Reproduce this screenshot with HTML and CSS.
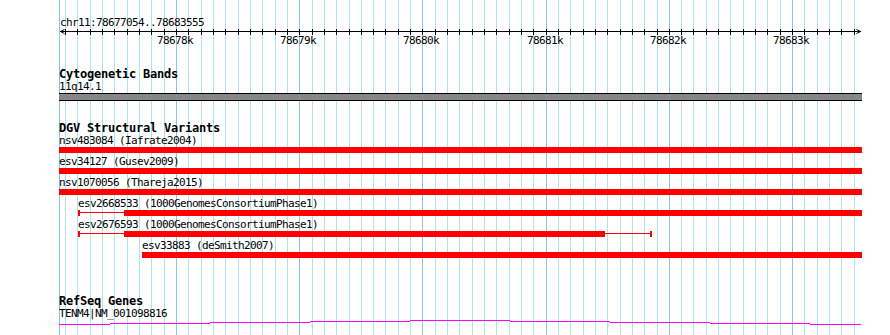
FILE: index.html
```html
<!DOCTYPE html>
<html>
  <head>
    <title>chr11:78677054..78683555</title>
    <link rel="stylesheet" href="styles.css">
  </head>
  <body>
    <div class="browser">
      <!-- grid behind every track, one line per 100 bp -->
      <svg class="grid" width="803" height="335" viewBox="0 0 803 335">
        <path class="grid-minor" d="M6.5 0V335M18.5 0V335M31.5 0V335M43.5 0V335M55.5 0V335M68.5 0V335M80.5 0V335M92.5 0V335M105.5 0V335M129.5 0V335M142.5 0V335M154.5 0V335M166.5 0V335M179.5 0V335M191.5 0V335M203.5 0V335M216.5 0V335M228.5 0V335M253.5 0V335M265.5 0V335M277.5 0V335M290.5 0V335M302.5 0V335M314.5 0V335M326.5 0V335M339.5 0V335M351.5 0V335M376.5 0V335M388.5 0V335M400.5 0V335M413.5 0V335M425.5 0V335M437.5 0V335M450.5 0V335M462.5 0V335M474.5 0V335M499.5 0V335M511.5 0V335M524.5 0V335M536.5 0V335M548.5 0V335M561.5 0V335M573.5 0V335M585.5 0V335M598.5 0V335M622.5 0V335M634.5 0V335M647.5 0V335M659.5 0V335M671.5 0V335M684.5 0V335M696.5 0V335M708.5 0V335M721.5 0V335M745.5 0V335M758.5 0V335M770.5 0V335M782.5 0V335M795.5 0V335"/>
        <path class="grid-major" d="M0.5 0V335M117.5 0V335M240.5 0V335M363.5 0V335M487.5 0V335M610.5 0V335M733.5 0V335"/>
      </svg>

      <section class="ruler">
        <div class="ruler-label">chr11:78677054..78683555</div>
        <svg class="scale" width="803" height="20" viewBox="0 0 803 20">
          <rect x="1" y="3" width="801" height="1"/>
          <path class="ticks" d="M6.5 1V7M18.5 1V7M31.5 1V7M43.5 1V7M55.5 1V7M68.5 1V7M80.5 1V7M92.5 1V7M105.5 1V7M117.5 1V7M129.5 1V7M142.5 1V7M154.5 1V7M166.5 1V7M179.5 1V7M191.5 1V7M203.5 1V7M216.5 1V7M228.5 1V7M240.5 1V7M253.5 1V7M265.5 1V7M277.5 1V7M290.5 1V7M302.5 1V7M314.5 1V7M326.5 1V7M339.5 1V7M351.5 1V7M363.5 1V7M376.5 1V7M388.5 1V7M400.5 1V7M413.5 1V7M425.5 1V7M437.5 1V7M450.5 1V7M462.5 1V7M474.5 1V7M487.5 1V7M499.5 1V7M511.5 1V7M524.5 1V7M536.5 1V7M548.5 1V7M561.5 1V7M573.5 1V7M585.5 1V7M598.5 1V7M610.5 1V7M622.5 1V7M634.5 1V7M647.5 1V7M659.5 1V7M671.5 1V7M684.5 1V7M696.5 1V7M708.5 1V7M721.5 1V7M733.5 1V7M745.5 1V7M758.5 1V7M770.5 1V7M782.5 1V7M795.5 1V7"/>
          <polyline class="arrow" points="5.5,1.5 1.5,3.5 5.5,5.5"/>
          <polyline class="arrow" points="797.5,1.5 801.5,3.5 797.5,5.5"/>
          <text class="tick-label" x="116" y="16">78678k</text>
          <text class="tick-label" x="239" y="16">78679k</text>
          <text class="tick-label" x="362" y="16">78680k</text>
          <text class="tick-label" x="486" y="16">78681k</text>
          <text class="tick-label" x="609" y="16">78682k</text>
          <text class="tick-label" x="732" y="16">78683k</text>
        </svg>
      </section>

      <section class="track cyto">
        <h2 class="track-title">Cytogenetic Bands</h2>
        <div class="feature-label">11q14.1</div>
        <div class="band"></div>
      </section>

      <section class="track dgv">
        <h2 class="track-title">DGV Structural Variants</h2>
        <div class="variant">
          <div class="feature-label">nsv483084 (Iafrate2004)</div>
          <svg class="glyph" width="803" height="6" viewBox="0 0 803 6"><rect x="0" y="0" width="803" height="6"/></svg>
        </div>
        <div class="variant">
          <div class="feature-label">esv34127 (Gusev2009)</div>
          <svg class="glyph" width="803" height="6" viewBox="0 0 803 6"><rect x="0" y="0" width="803" height="6"/></svg>
        </div>
        <div class="variant">
          <div class="feature-label">nsv1070056 (Thareja2015)</div>
          <svg class="glyph" width="803" height="6" viewBox="0 0 803 6"><rect x="0" y="0" width="803" height="6"/></svg>
        </div>
        <div class="variant">
          <div class="feature-label" style="margin-left:19px">esv2668533 (1000GenomesConsortiumPhase1)</div>
          <svg class="glyph" width="803" height="6" viewBox="0 0 803 6">
            <rect x="19" y="0" width="2" height="6"/>
            <rect x="19" y="2" width="46" height="1"/>
            <rect x="65" y="0" width="738" height="6"/>
          </svg>
        </div>
        <div class="variant">
          <div class="feature-label" style="margin-left:19px">esv2676593 (1000GenomesConsortiumPhase1)</div>
          <svg class="glyph" width="803" height="6" viewBox="0 0 803 6">
            <rect x="19" y="0" width="2" height="6"/>
            <rect x="19" y="2" width="46" height="1"/>
            <rect x="65" y="0" width="481" height="6"/>
            <rect x="546" y="2" width="46" height="1"/>
            <rect x="591" y="0" width="2" height="6"/>
          </svg>
        </div>
        <div class="variant">
          <div class="feature-label" style="margin-left:83px">esv33883 (deSmith2007)</div>
          <svg class="glyph" width="803" height="6" viewBox="0 0 803 6"><rect x="83" y="0" width="720" height="6"/></svg>
        </div>
      </section>

      <section class="track refseq">
        <h2 class="track-title">RefSeq Genes</h2>
        <div class="feature-label">TENM4|NM_001098816</div>
        <svg class="gene" width="803" height="6" viewBox="0 0 803 6">
          <rect x="0" y="4" width="51" height="1"/>
          <rect x="51" y="3" width="100" height="1"/>
          <rect x="151" y="2" width="100" height="1"/>
          <rect x="251" y="1" width="100" height="1"/>
          <rect x="351" y="0" width="100" height="1"/>
          <rect x="451" y="1" width="100" height="1"/>
          <rect x="551" y="2" width="100" height="1"/>
          <rect x="651" y="3" width="100" height="1"/>
          <rect x="751" y="4" width="51" height="1"/>
        </svg>
      </section>
    </div>
  </body>
</html>
```

FILE: styles.css
```css
/* Genome browser panel */
body {
  margin: 0;
  background: #fff;
  color: #000;
  font-family: "DejaVu Sans Mono", "Liberation Mono", monospace;
}
.browser {
  position: relative;
  isolation: isolate;
  margin-left: 59px;
  width: 803px;
  height: 335px;
  overflow: hidden;
}
.grid {
  position: absolute;
  top: 0;
  left: 0;
  z-index: -1;
}
.grid path {
  fill: none;
  stroke-width: 1;
  shape-rendering: crispEdges;
}
.grid-minor {
  stroke: #aae5eb;
}
.grid-major {
  stroke: #85c6e6;
}
svg {
  display: block;
}

/* Ruler */
.ruler {
  padding-top: 17px;
}
.ruler-label,
.feature-label {
  font-size: 11px;
  line-height: 11px;
  letter-spacing: -0.62px;
  white-space: nowrap;
}
.ruler-label {
  padding-left: 1px;
}
.scale rect {
  fill: #000;
}
.ticks {
  stroke: #000;
  stroke-width: 1;
  shape-rendering: crispEdges;
}
.arrow {
  fill: none;
  stroke: #000;
  stroke-width: 1;
}
.tick-label {
  font-family: "DejaVu Sans Mono", "Liberation Mono", monospace;
  font-size: 11px;
  letter-spacing: -0.62px;
  text-anchor: middle;
  fill: #000;
}

/* Tracks */
.track-title {
  margin: 0;
  font-size: 12px;
  line-height: 12px;
  font-weight: bold;
  letter-spacing: -0.22px;
  white-space: nowrap;
}
.track-title + .feature-label,
.track-title + .variant {
  margin-top: 1px;
}
.cyto {
  margin-top: 20px;
}
.band {
  margin-top: 1px;
  height: 6px;
  background: #878787;
  border-top: 1px solid #000;
  border-bottom: 1px solid #000;
}
.dgv {
  margin-top: 21px;
}
.variant {
  margin-bottom: 3px;
}
.glyph {
  margin-top: 1px;
}
.glyph rect {
  fill: #ff0000;
}
.refseq {
  margin-top: 37px;
}
.gene {
  margin-top: 1px;
}
.gene rect {
  fill: #ff00ff;
}
```
